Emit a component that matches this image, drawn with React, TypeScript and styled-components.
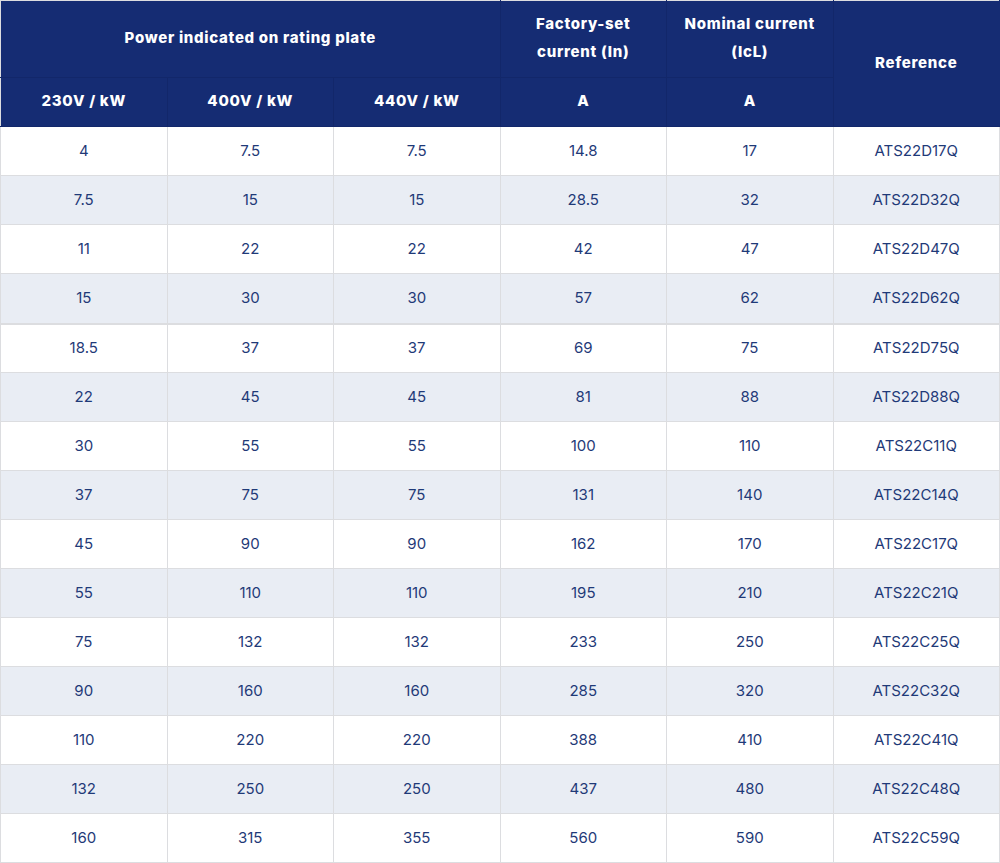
import styled, { createGlobalStyle } from 'styled-components';

const COLOR = {
  NAVY: '#152c73',
  NAVY_LINE: '#12276a',
  TEXT: '#1f3a78',
  STRIPE: '#e9edf4',
  LINE: '#dcdde0',
};

type Row = [string, string, string, string, string, string];

const ROWS: Row[] = [
  ['4', '7.5', '7.5', '14.8', '17', 'ATS22D17Q'],
  ['7.5', '15', '15', '28.5', '32', 'ATS22D32Q'],
  ['11', '22', '22', '42', '47', 'ATS22D47Q'],
  ['15', '30', '30', '57', '62', 'ATS22D62Q'],
  ['18.5', '37', '37', '69', '75', 'ATS22D75Q'],
  ['22', '45', '45', '81', '88', 'ATS22D88Q'],
  ['30', '55', '55', '100', '110', 'ATS22C11Q'],
  ['37', '75', '75', '131', '140', 'ATS22C14Q'],
  ['45', '90', '90', '162', '170', 'ATS22C17Q'],
  ['55', '110', '110', '195', '210', 'ATS22C21Q'],
  ['75', '132', '132', '233', '250', 'ATS22C25Q'],
  ['90', '160', '160', '285', '320', 'ATS22C32Q'],
  ['110', '220', '220', '388', '410', 'ATS22C41Q'],
  ['132', '250', '250', '437', '480', 'ATS22C48Q'],
  ['160', '315', '355', '560', '590', 'ATS22C59Q'],
];

const GlobalStyle = createGlobalStyle`
  body {
    margin: 0;
    background: #ffffff;
    font-family: Inter, "Open Sans", sans-serif;
  }
`;

const App = () => {
  return (
    <>
      <GlobalStyle />
      <RatingTable>
        <colgroup>
          {ROWS[0].map((_, i) => (
            <col key={i} />
          ))}
        </colgroup>
        <thead>
          <HeadRow $height={77}>
            <HeadCell colSpan={3}>Power indicated on rating plate</HeadCell>
            <HeadCell>
              Factory-set
              <br />
              current (In)
            </HeadCell>
            <HeadCell>
              Nominal current
              <br />
              (IcL)
            </HeadCell>
            <HeadCell rowSpan={2} $last>
              Reference
            </HeadCell>
          </HeadRow>
          <HeadRow $height={49}>
            <HeadCell>230V / kW</HeadCell>
            <HeadCell>400V / kW</HeadCell>
            <HeadCell>440V / kW</HeadCell>
            <HeadCell>A</HeadCell>
            <HeadCell>A</HeadCell>
          </HeadRow>
        </thead>
        <tbody>
          {ROWS.map((row, i) => (
            <BodyRow key={row[5]} $striped={i % 2 === 1} $thick={i === 3}>
              {row.map((value, j) => (
                <BodyCell key={j}>{value}</BodyCell>
              ))}
            </BodyRow>
          ))}
        </tbody>
      </RatingTable>
    </>
  );
};

const RatingTable = styled.table`
  width: 1000px;
  table-layout: fixed;
  border-collapse: collapse;
  border-top: 1px solid ${COLOR.LINE};
  border-left: 1px solid ${COLOR.LINE};

  col {
    width: 16.666%;
  }

  thead {
    box-shadow: 0 2px 3px rgba(0, 0, 0, 0.08);
  }
`;

const HeadRow = styled.tr<{ $height: number }>`
  height: ${({ $height }) => $height}px;
  background-color: ${COLOR.NAVY};
`;

const HeadCell = styled.th<{ $last?: boolean }>`
  padding: 0 4px 2px;
  border-right: 1px solid ${({ $last }) => ($last ? COLOR.NAVY : COLOR.NAVY_LINE)};
  border-bottom: 1px solid ${COLOR.NAVY_LINE};
  color: #ffffff;
  font-size: 15px;
  font-weight: 800;
  letter-spacing: 0.7px;
  line-height: 28px;
  text-align: center;
  vertical-align: middle;
`;

const BodyRow = styled.tr<{ $striped?: boolean; $thick?: boolean }>`
  height: ${({ $thick }) => ($thick ? 50 : 49)}px;
  background-color: ${({ $striped }) => ($striped ? COLOR.STRIPE : '#ffffff')};
  border-bottom: ${({ $thick }) => ($thick ? 2 : 1)}px solid ${COLOR.LINE};
`;

const BodyCell = styled.td`
  padding: 0 8px 2px;
  border-right: 1px solid ${COLOR.LINE};
  color: ${COLOR.TEXT};
  font-size: 15px;
  font-weight: 400;
  text-align: center;
  vertical-align: middle;
`;

export default App;
